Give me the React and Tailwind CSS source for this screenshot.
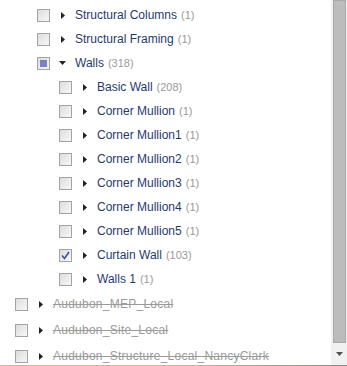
import React from "react";

const nested = [
  { label: "Basic Wall", count: 208 },
  { label: "Corner Mullion", count: 1 },
  { label: "Corner Mullion1", count: 1 },
  { label: "Corner Mullion2", count: 1 },
  { label: "Corner Mullion3", count: 1 },
  { label: "Corner Mullion4", count: 1 },
  { label: "Corner Mullion5", count: 1 },
  { label: "Curtain Wall", count: 103, checked: true },
  { label: "Walls 1", count: 1 },
];

const models = ["Audubon_MEP_Local", "Audubon_Site_Local", "Audubon_Structure_Local_NancyClark"];

function Checkbox({ state }) {
  return (
    <span className="flex h-[13px] w-[13px] shrink-0 items-center justify-center border border-[#a4a4a4] bg-gradient-to-br from-[#dcdcdc] to-[#f8f8f8]">
      {state === "mixed" && <span className="h-[7px] w-[7px] bg-[#7b82c2]" />}
      {state === "checked" && (
        <svg width="9" height="9" viewBox="0 0 9 9">
          <path d="M1 4.5 L3.5 7.5 L8 1" fill="none" stroke="#3c4fa8" strokeWidth="1.6" />
        </svg>
      )}
    </span>
  );
}

function Arrow({ open }) {
  return open ? (
    <svg width="7" height="4" viewBox="0 0 7 4" className="shrink-0">
      <path d="M0 0 L7 0 L3.5 4 Z" fill="#222" />
    </svg>
  ) : (
    <svg width="4" height="7" viewBox="0 0 4 7" className="shrink-0">
      <path d="M0 0 L4 3.5 L0 7 Z" fill="#222" />
    </svg>
  );
}

function Row({ indent, label, count, state, open, strike, tall }) {
  return (
    <div className={`flex items-center ${tall ? "h-[26px]" : "h-6"}`} style={{ paddingLeft: indent }}>
      <Checkbox state={state} />
      <span className="ml-[9px] flex w-[7px] justify-center">
        <Arrow open={open} />
      </span>
      <span
        className={`ml-[9px] text-[12px] leading-none ${
          strike ? "tracking-[0.25px] text-[#9a9a9a] line-through" : "text-[#1f3a6d]"
        }`}
      >
        {label}
      </span>
      {count !== undefined && (
        <span className="ml-[4px] text-[11px] leading-none text-[#9a9a9a]">({count})</span>
      )}
    </div>
  );
}

export default function App() {
  return (
    <div className="flex h-[366px] w-[347px] flex-col bg-white font-['Liberation_Sans',Arial,sans-serif]">
      <div className="flex min-h-0 flex-1">
        <div className="flex-1 overflow-hidden pt-[3px]">
          <Row indent={37} label="Structural Columns" count={1} />
          <Row indent={37} label="Structural Framing" count={1} />
          <Row indent={37} label="Walls" count={318} state="mixed" open />
          {nested.map((n) => (
            <Row key={n.label} indent={59} label={n.label} count={n.count} state={n.checked ? "checked" : undefined} />
          ))}
          {models.map((m) => (
            <Row key={m} indent={15} label={m} strike tall />
          ))}
        </div>
        <div className="flex w-[16px] flex-col bg-[#f1f1f1] pl-[2px]">
          <div className="h-[343px] w-[13px] border border-[#a9a9a9] bg-[#bcbcbc]" />
          <div className="flex flex-1 items-center justify-center pr-[2px]">
            <svg width="7" height="4" viewBox="0 0 7 4">
              <path d="M0 0 L7 0 L3.5 4 Z" fill="#505050" />
            </svg>
          </div>
        </div>
      </div>
      <div className="h-px bg-gradient-to-r from-[#c9b994] via-[#c9b994] to-[#8a8a8a]" />
    </div>
  );
}
